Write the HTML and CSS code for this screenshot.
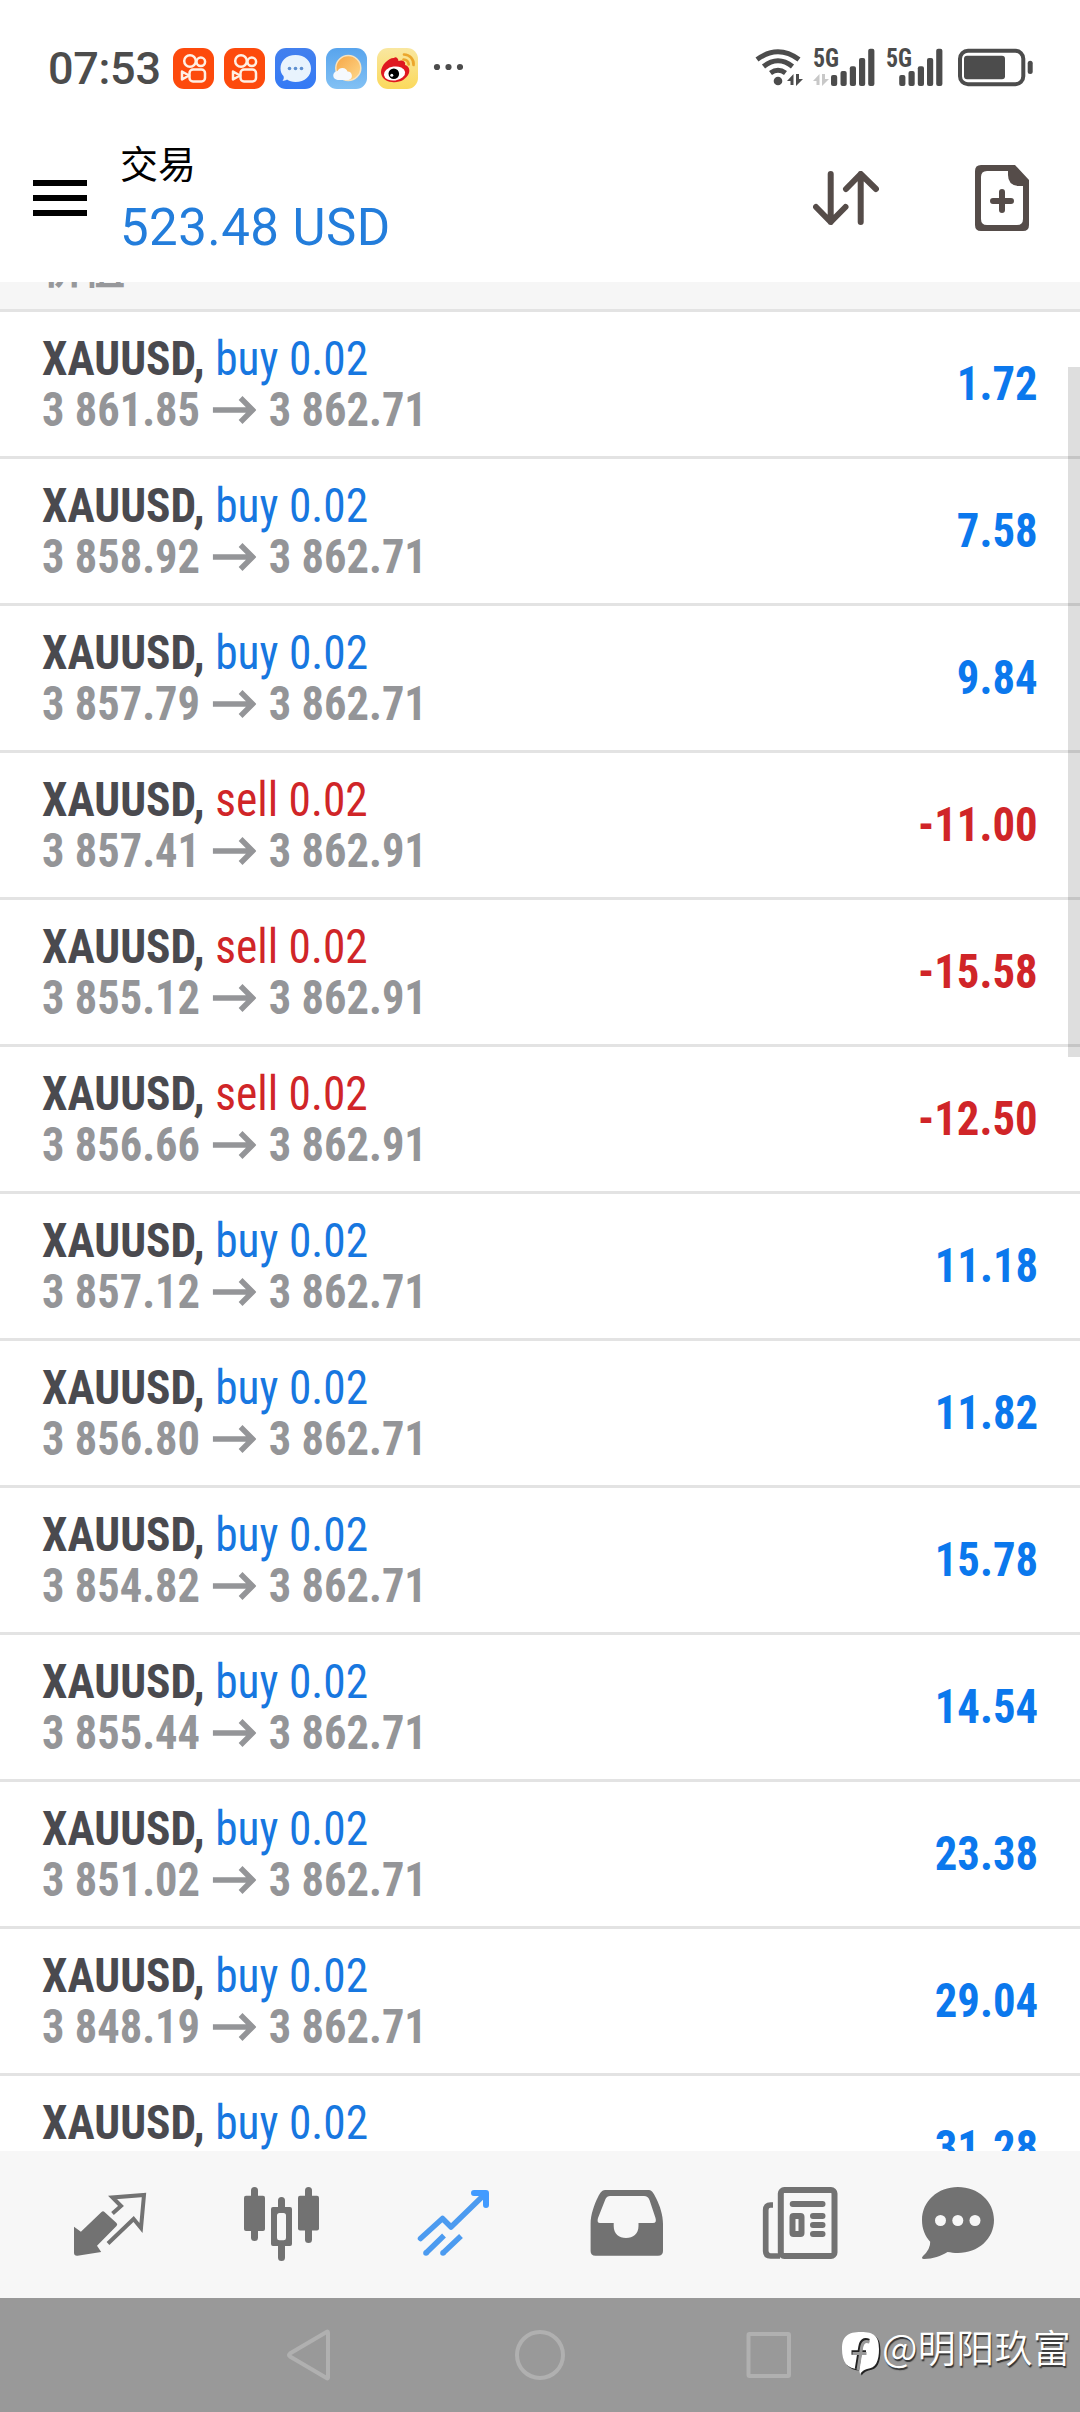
FILE: index.html
```html
<!DOCTYPE html>
<html lang="zh-CN">
<head>
<meta charset="utf-8">
<title>交易</title>
<link rel="stylesheet" href="styles.css">
</head>
<body>
<svg class="defs" width="0" height="0" aria-hidden="true">
  <symbol id="arrow" viewBox="0 0 44 28" preserveAspectRatio="none"><path d="M0 14H40M28 2L40 14L28 26" fill="none" stroke="currentColor" stroke-width="5.4"/></symbol>
  <symbol id="camera" viewBox="0 0 41 41">
    <rect width="41" height="41" rx="11" fill="#fd4a0c"/>
    <g fill="none" stroke="#fff0e4" stroke-width="2.5" stroke-linejoin="round"><circle cx="17" cy="13" r="5.8"/><circle cx="27.8" cy="13.8" r="4.3"/><rect x="16.5" y="21.5" width="15.5" height="12" rx="3.5"/><path d="M9 23.5L16 27.5L9 31.5Z"/></g>
  </symbol>
  <symbol id="updown" viewBox="0 0 16 12"><path d="M0 7L6.5 0V11H3.5V7ZM9 0H12V5H16L9 12Z" fill="currentColor"/></symbol>
</svg>
<div class="screen">
  <header class="status">
    <span class="clock">07:53</span>
    <div class="apps">
      <svg width="41" height="41"><use href="#camera"/></svg>
      <svg width="41" height="41"><use href="#camera"/></svg>
      <svg width="41" height="41" viewBox="0 0 41 41"><defs><linearGradient id="msg" x2="0" y2="1"><stop stop-color="#4380ee"/><stop offset="1" stop-color="#347af5"/></linearGradient></defs><rect width="41" height="41" rx="11" fill="url(#msg)"/><path d="M20.500 7C30 7 36 13 36 20.500S30 34 20.500 34C17 34 14 33 12 31.500C11 32.500 9 33 7.500 32.500C9 31 9 29.500 8.500 28C6.500 26 5.500 23.500 5.500 20.500C5.500 13 11 7 20.500 7Z" fill="#e8f3fd"/><g fill="#5d8fd0"><circle cx="14.500" cy="20.500" r="1.800"/><circle cx="20.500" cy="20.500" r="1.800"/><circle cx="26.500" cy="20.500" r="1.800"/></g></svg>
      <svg width="41" height="41" viewBox="0 0 41 41"><defs><linearGradient id="sky" x2="0" y2="1"><stop stop-color="#58a4ed"/><stop offset="1" stop-color="#82c1f4"/></linearGradient><linearGradient id="sun" x1="0" y1="0" x2="1" y2="1"><stop stop-color="#f7a545"/><stop offset="1" stop-color="#fdd98b"/></linearGradient></defs><rect width="41" height="41" rx="11" fill="url(#sky)"/><circle cx="22.300" cy="20" r="12.500" fill="url(#sun)" stroke="#f7e3c0" stroke-width="1.500"/><path d="M12 32a4.500 4.500 0 0 1-.5-9 5.500 5.500 0 0 1 10 .5 4.300 4.300 0 0 1 1 8.500Z" fill="#f5f9fd"/></svg>
      <svg width="41" height="41" viewBox="0 0 41 41"><defs><linearGradient id="gold" x2="0" y2="1"><stop stop-color="#f9e7a0"/><stop offset="1" stop-color="#fbd95c"/></linearGradient></defs><rect width="41" height="41" rx="11" fill="url(#gold)"/><path d="M4 24C4 17 12 9.500 17 10C18 8.500 21 9 21.500 13C25 11.500 29 13 28 17C32 18 33 22 32 25C29 32 22 35 15 34C8 33.500 4 29 4 24Z" fill="#df1820"/><ellipse cx="17.500" cy="25.500" rx="10.700" ry="7" transform="rotate(-8 17.500 25.500)" fill="#fff"/><circle cx="16.800" cy="25.800" r="5.300"/><circle cx="14.800" cy="27.300" r="1.500" fill="#fff"/><path d="M27 6.500A9.500 9.500 0 0 1 36.500 17M26.500 11.500A5 5 0 0 1 31.700 16.500" fill="none" stroke="#eba62c" stroke-width="2.700" stroke-linecap="round"/></svg>
    </div>
    <svg class="more" width="30" height="8"><g fill="#4c4c4c"><circle cx="4" cy="4" r="3.100"/><circle cx="15.500" cy="4" r="3.100"/><circle cx="27" cy="4" r="3.100"/></g></svg>
    <svg class="signals" width="300" height="60" viewBox="0 0 300 60">
      <g fill="none" stroke="#4c4c4c" stroke-width="5"><path d="M7 19.500Q28 4 49 19.500M13.500 26.500Q28 15 42.500 26.500M20.500 33Q28 27.500 35.500 33"/><rect x="210" y="10.700" width="63.300" height="33.500" rx="8" stroke-width="4"/></g>
      <circle cx="28" cy="41" r="4.300" fill="#4c4c4c"/>
      <use class="dark" href="#updown" x="37" y="34" width="16" height="12"/><use class="pale" href="#updown" x="63" y="34" width="16" height="12"/>
      <g fill="#4c4c4c"><text class="net" x="63" y="27.300" textLength="26" lengthAdjust="spacingAndGlyphs">5G</text><text class="net" x="136" y="27.300" textLength="26" lengthAdjust="spacingAndGlyphs">5G</text>
      <rect x="81" y="35" width="6.200" height="11" rx="2"/><rect x="90.500" y="31" width="6.200" height="15" rx="2"/><rect x="99.800" y="26.300" width="6.200" height="19.700" rx="2"/><rect x="109" y="18" width="6.200" height="28" rx="2"/><rect x="118.200" y="8.700" width="6.200" height="37.300" rx="2"/>
      <rect x="149.200" y="35" width="6.200" height="11" rx="2"/><rect x="158.500" y="31" width="6.200" height="15" rx="2"/><rect x="167.800" y="26.300" width="6.200" height="19.700" rx="2"/><rect x="177" y="18" width="6.200" height="28" rx="2"/><rect x="186.200" y="8.700" width="6.200" height="37.300" rx="2"/>
      <rect x="214" y="15.700" width="41" height="23.500" rx="3"/><rect x="277.700" y="20.700" width="5" height="13.300" rx="2.500"/></g>
    </svg>
  </header>

  <div class="toolbar">
    <svg class="menu" width="54" height="36"><path d="M0 3H54M0 18H54M0 33H54" stroke="#000" stroke-width="6"/></svg>
    <div class="account"><h1>交易</h1><p>523.48 USD</p></div>
    <svg class="sort" width="66" height="54" viewBox="0 0 66 54"><path d="M17.700 3V51M3 36L17.700 51L32.500 36M47.700 51V3M33 18L47.700 3L63 18" fill="none" stroke="#554c49" stroke-width="6" stroke-linecap="round" stroke-linejoin="round"/></svg>
    <svg class="new-order" width="54" height="66" viewBox="0 0 54 66"><path fill="#554c49" fill-rule="evenodd" d="M6 0H40L54 15V60Q54 66 48 66H6Q0 66 0 60V6Q0 0 6 0ZM12 6Q6 6 6 12V54Q6 60 12 60H42Q48 60 48 54V21H43Q33 20 33 10V6Z"/><path d="M27 27V45M18 36H36" stroke="#554c49" stroke-width="6" stroke-linecap="round"/></svg>
  </div>

  <main class="content">
    <div class="section"><span>价值</span></div>
    <div class="deal buy"><div><p class="symbol">XAUUSD, <span>buy 0.02</span></p><p class="price">3 861.85<svg><use href="#arrow"/></svg>3 862.71</p></div><strong>1.72</strong></div>
    <div class="deal buy"><div><p class="symbol">XAUUSD, <span>buy 0.02</span></p><p class="price">3 858.92<svg><use href="#arrow"/></svg>3 862.71</p></div><strong>7.58</strong></div>
    <div class="deal buy"><div><p class="symbol">XAUUSD, <span>buy 0.02</span></p><p class="price">3 857.79<svg><use href="#arrow"/></svg>3 862.71</p></div><strong>9.84</strong></div>
    <div class="deal sell"><div><p class="symbol">XAUUSD, <span>sell 0.02</span></p><p class="price">3 857.41<svg><use href="#arrow"/></svg>3 862.91</p></div><strong>-11.00</strong></div>
    <div class="deal sell"><div><p class="symbol">XAUUSD, <span>sell 0.02</span></p><p class="price">3 855.12<svg><use href="#arrow"/></svg>3 862.91</p></div><strong>-15.58</strong></div>
    <div class="deal sell"><div><p class="symbol">XAUUSD, <span>sell 0.02</span></p><p class="price">3 856.66<svg><use href="#arrow"/></svg>3 862.91</p></div><strong>-12.50</strong></div>
    <div class="deal buy"><div><p class="symbol">XAUUSD, <span>buy 0.02</span></p><p class="price">3 857.12<svg><use href="#arrow"/></svg>3 862.71</p></div><strong>11.18</strong></div>
    <div class="deal buy"><div><p class="symbol">XAUUSD, <span>buy 0.02</span></p><p class="price">3 856.80<svg><use href="#arrow"/></svg>3 862.71</p></div><strong>11.82</strong></div>
    <div class="deal buy"><div><p class="symbol">XAUUSD, <span>buy 0.02</span></p><p class="price">3 854.82<svg><use href="#arrow"/></svg>3 862.71</p></div><strong>15.78</strong></div>
    <div class="deal buy"><div><p class="symbol">XAUUSD, <span>buy 0.02</span></p><p class="price">3 855.44<svg><use href="#arrow"/></svg>3 862.71</p></div><strong>14.54</strong></div>
    <div class="deal buy"><div><p class="symbol">XAUUSD, <span>buy 0.02</span></p><p class="price">3 851.02<svg><use href="#arrow"/></svg>3 862.71</p></div><strong>23.38</strong></div>
    <div class="deal buy"><div><p class="symbol">XAUUSD, <span>buy 0.02</span></p><p class="price">3 848.19<svg><use href="#arrow"/></svg>3 862.71</p></div><strong>29.04</strong></div>
    <div class="deal buy"><div><p class="symbol">XAUUSD, <span>buy 0.02</span></p></div><strong>31.28</strong></div>
    <div class="scrollbar"></div>
  </main>

  <nav class="tabs">
    <svg viewBox="0 0 90 90"><path d="M9 46.700L15.900 51.700L36.500 32Q38 30.500 39.500 32L51.500 43Q53 44.500 51.500 46L32 65.700L36.200 72L12.500 75.700Q9 76 9 72.700Z" fill="#727272"/><path d="M47.500 33.500L56 26L47.500 17.500L79 15L76 48L68.600 39L43 63.500" fill="none" stroke="#727272" stroke-width="4"/></svg>
    <svg viewBox="0 0 90 90" fill="#727272"><rect x="8" y="15.700" width="21" height="35.300" rx="2"/><rect x="15" y="7" width="7" height="54" rx="3.500"/><rect x="62" y="15.700" width="21" height="34.700" rx="2"/><rect x="69" y="7" width="7" height="56" rx="3.500"/><path fill-rule="evenodd" d="M37 27H54Q56 27 56 29V64Q56 66 54 66H37Q35 66 35 64V29Q35 27 37 27ZM43.500 33Q41 33 41 35.500V58Q41 60.300 43.500 60.300H47.500Q50 60.300 50 58V35.500Q50 33 47.500 33Z"/><path d="M42 28V20.500a3.500 3.500 0 0 1 7 0V28ZM42 65V77.500a3.500 3.500 0 0 0 7 0V65Z"/></svg>
    <svg viewBox="0 0 90 90" fill="none" stroke="#4c9bf0" stroke-width="5.500"><path d="M11.500 58.500L33.500 38.500L42 47L76 14" stroke-linecap="round" stroke-linejoin="round"/><path d="M17 73L35 55.500M34 73L52 56"/><g fill="#4c9bf0" stroke="none"><circle cx="17" cy="73" r="2.800"/><circle cx="34" cy="73" r="2.800"/></g><path d="M65 13H77V25" stroke="#429bff" stroke-width="6" stroke-linecap="round" stroke-linejoin="round"/><path d="M69 14H77V22Z" fill="#429bff" stroke="none"/></svg>
    <svg viewBox="0 0 90 90"><path fill="#727272" fill-rule="evenodd" d="M23 10H67C70 10 72 14 74 18C78 26 81 35 81 44V71Q81 75.700 76 75.700H13.500Q8.600 75.700 8.600 71V44C8.600 35 12 25 16 17C18 13 20 10 23 10ZM28 16Q25 16 23.500 19L16 38Q14.500 43 18 43H31.700V46C31.700 54 37 58 44 58S56.500 54 56.500 46V43H71Q75 43 73.500 38L67.500 20Q66 16 62 16Z"/></svg>
    <svg viewBox="0 0 90 90" fill="none" stroke="#727272"><rect x="25.800" y="10" width="53.700" height="66" rx="3.500" stroke-width="6"/><path d="M18 25H15.500Q10.700 25 10.700 30V71Q10.700 76 15.500 76H25" stroke-width="5.700"/><path d="M37.700 24H67.500M58 36H67.500M58 45H67.500M58 54H67.500" stroke-width="6" stroke-linecap="round"/><rect x="37.500" y="36" width="9" height="18" rx="1" stroke-width="6"/></svg>
    <svg viewBox="0 0 90 90"><path d="M44.900 7C65 7 81 21 81 40S65 73 44.900 73C41 73 38 72.500 34.500 72C28 76 20 79 11 79Q7.500 78.500 10 76Q17.500 69 17.200 61.700C12 56 9 49 9 40C9 21 25 7 44.900 7Z" fill="#727272"/><g fill="#f7f7f7"><circle cx="27.500" cy="40.500" r="5.500"/><circle cx="44.800" cy="40.500" r="5.500"/><circle cx="62" cy="40.500" r="5.500"/></g></svg>
  </nav>

  <footer class="system">
    <svg class="back" width="50" height="54" viewBox="0 0 50 54"><path d="M43 4.500V49.500Q43 51 41.500 50L5 28.500Q3 27 5 25.500L41.500 4Q43 3 43 4.500Z" /></svg>
    <svg class="home" width="54" height="54" viewBox="0 0 54 54"><circle cx="27" cy="27" r="23"/></svg>
    <svg class="recent" width="50" height="54" viewBox="0 0 50 54"><rect x="4.500" y="6" width="40.500" height="42" rx="1"/></svg>
    <div class="author">
      <svg width="40" height="46" viewBox="0 0 40 46"><path d="M19 0C32 0 37 4 37 17C37 29 34 36 25 37C21 38 20 40 18 42L17 37C5 37 0 30 0 17C0 4 6 0 19 0Z" fill="#222" transform="translate(1.500 1.500)"/><path d="M19 0C32 0 37 4 37 17C37 29 34 36 25 37C21 38 20 40 18 42L17 37C5 37 0 30 0 17C0 4 6 0 19 0Z" fill="#fff"/><path d="M27 9C22 7 19.500 9 18.500 15L15 37M9.500 20.500H24" fill="none" stroke="#222" stroke-width="4.500"/><path d="M27.500 10C23 8.500 20.500 10 19.500 16L16 38M10.500 21.500H24.500" fill="none" stroke="#999" stroke-width="3"/></svg>
      <span>@明阳玖富</span>
    </div>
  </footer>
</div>
</body>
</html>
```
FILE: styles.css
```css
* { box-sizing: border-box; }
body, h1, p { margin: 0; }
body { background: #fff; font-family: Roboto, "Noto Sans CJK SC", sans-serif; }
svg { display: block; flex: none; }
.defs { height: 0; }
.screen { width: 1080px; height: 2412px; display: flex; flex-direction: column; overflow: hidden; }

.status { height: 130px; flex: none; display: flex; align-items: flex-start; padding: 40px 30px 0 48px; }
.clock { width: 125px; font-size: 45px; line-height: 57px; font-weight: 500; letter-spacing: -.3px; color: #4c4c4c; white-space: nowrap; }
.apps { display: flex; gap: 10px; padding-top: 8px; }
.more { margin: 23px 0 0 15px; }
.signals { margin-left: auto; }
.net { font: 700 25px "Roboto Condensed", Roboto, sans-serif; }
.dark { color: #4c4c4c; }
.pale { color: #c8c8c8; }

.toolbar { height: 152px; flex: none; display: flex; align-items: flex-start; padding: 0 51px 0 33px; }
.menu { margin-top: 50px; }
.account { margin-left: 33px; padding-top: 11px; }
.account h1 { font-size: 38px; line-height: 48px; font-weight: 400; color: #000; }
.account p { font-size: 51px; line-height: 60px; padding-top: 9px; letter-spacing: .45px; color: #237ddb; white-space: nowrap; }
.sort { margin: 41px 96px 0 auto; }
.new-order { margin-top: 35px; }

.content { height: 1869px; flex: none; overflow: hidden; position: relative; }
.section { height: 30px; display: flex; align-items: flex-end; padding: 0 0 14px 43px; overflow: hidden; background: #f6f6f6; border-bottom: 3px solid #e3e3e3; color: #97989b; font-size: 41px; line-height: 50px; font-weight: 700; }
.deal { height: 147px; display: flex; justify-content: space-between; padding: 21px 42px 0; border-bottom: 3px solid #e3e3e3; font-family: "Roboto Condensed", Roboto, sans-serif; font-stretch: 75%; font-size: 48.5px; line-height: 51px; white-space: nowrap; }
.deal:last-of-type { border: 0; }
.symbol { color: #4a4a4f; font-weight: 700; transform: scaleX(.937); transform-origin: left; }
.symbol span { font-weight: 400; }
.price { display: flex; align-items: center; color: #949598; font-weight: 700; transform: scaleX(.917); transform-origin: left; }
.price svg { width: 48px; height: 28px; margin: 0 13px 0 14px; }
.deal strong { padding-top: 25px; transform: scaleX(.922); transform-origin: right; }
.buy span { color: #1777e0; }
.buy strong { color: #0b78ed; }
.sell span, .sell strong { color: #d02528; }
.scrollbar { position: absolute; top: 85px; right: 0; width: 12px; height: 690px; background: rgba(0, 0, 0, .13); }

.tabs { height: 147px; flex: none; display: grid; grid-template-columns: 171px 173px 173px 173px 158px 90px; padding: 29px 0 0 65px; background: #f7f7f7; }
.tabs svg { width: 90px; height: 90px; }

.system { height: 114px; flex: none; display: flex; align-items: flex-start; padding: 30px 0 0 285px; background: #999; }
.system > svg { fill: none; stroke: #b0b0b0; stroke-width: 4; }
.home { margin-left: 178px; }
.recent { margin-left: 177px; }
.author { display: flex; align-items: flex-start; margin-left: 48px; padding-top: 4px; }
.author span { margin-left: 0; margin-top: -14px; font: 350 38px/56px "Noto Sans CJK SC", sans-serif; letter-spacing: .3px; color: #fff; text-shadow: 1px 2px 1px #333; white-space: nowrap; }
```
